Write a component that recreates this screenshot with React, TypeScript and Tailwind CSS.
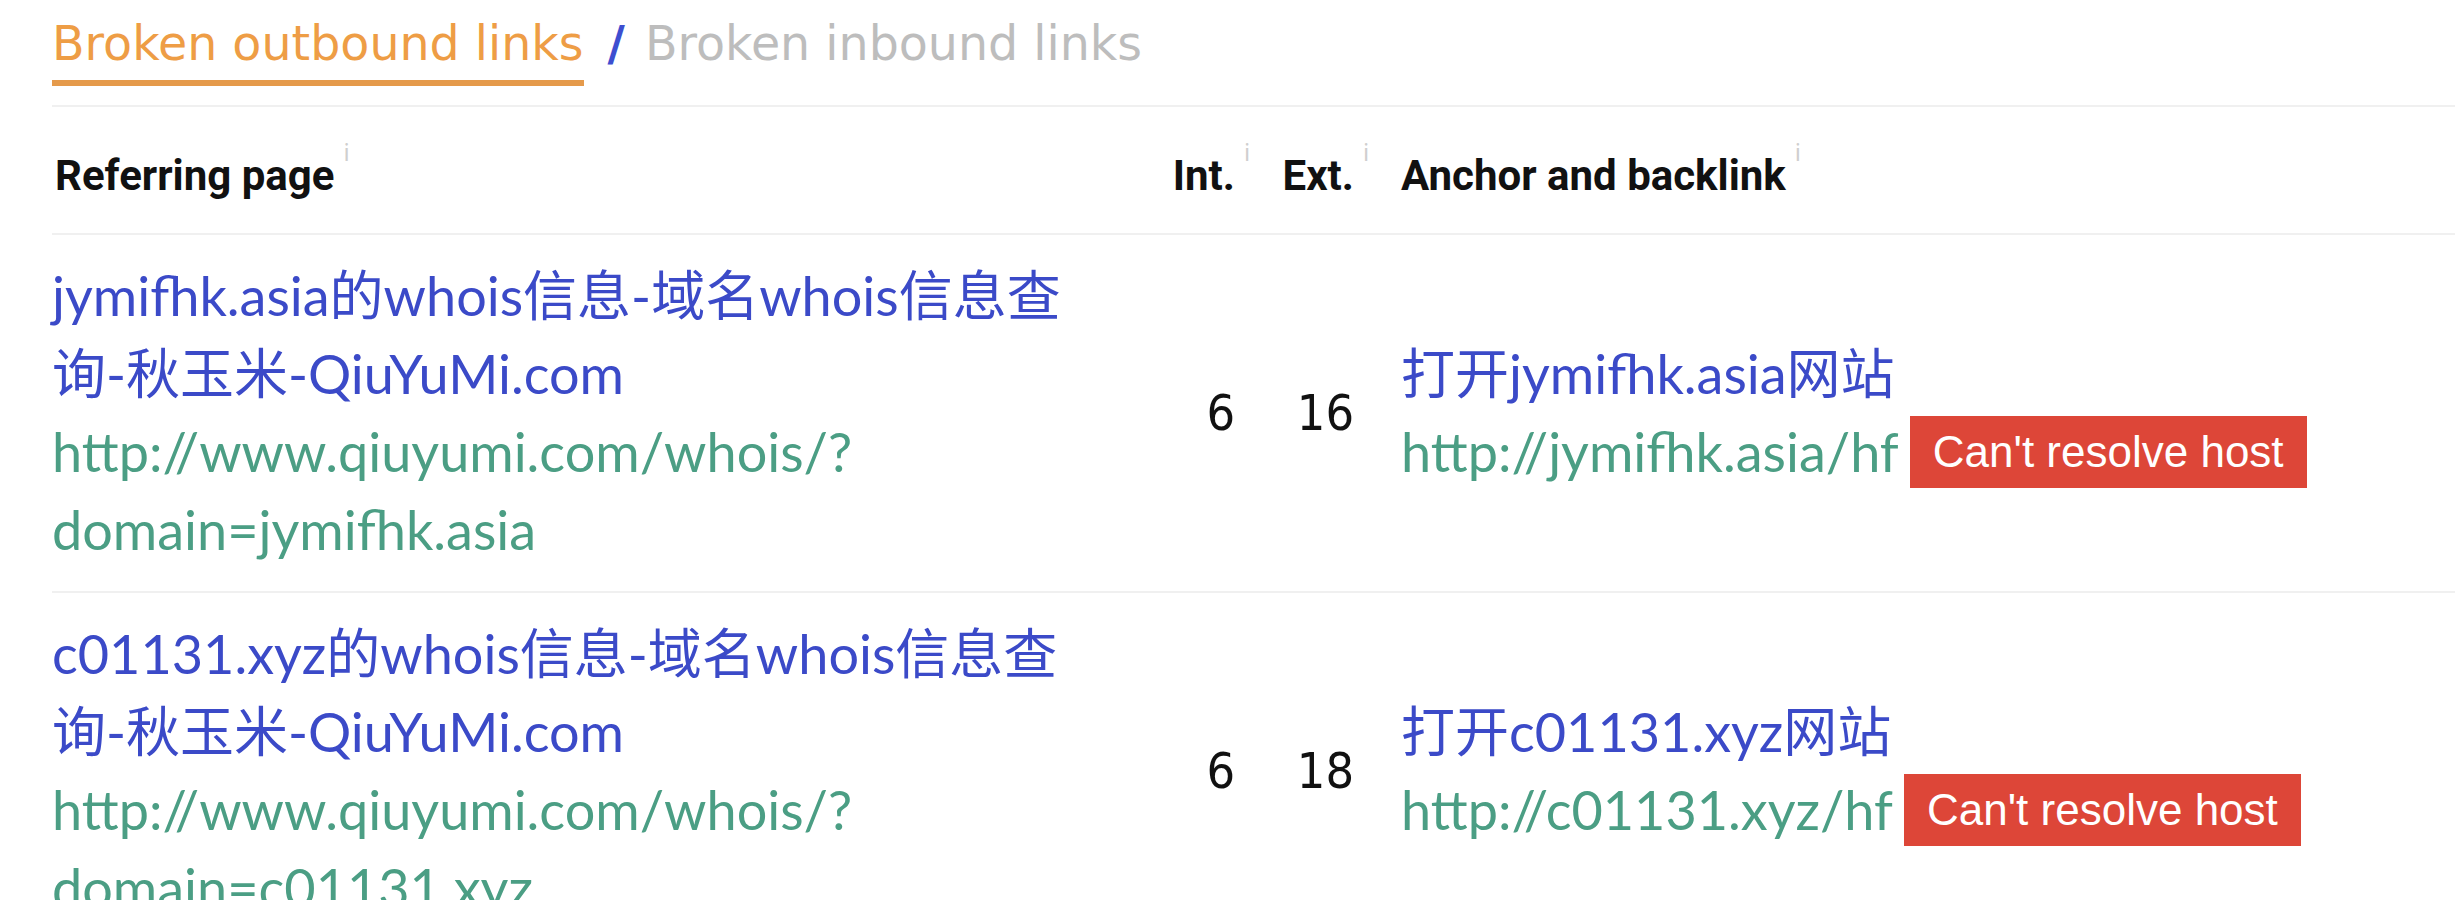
import type { ReactNode } from "react";

type Row = {
  title: string;
  url: string[];
  int: number;
  ext: number;
  anchor: string;
  backlink: string;
};

const rows: Row[] = [
  {
    title: "jymifhk.asia的whois信息-域名whois信息查询-秋玉米-QiuYuMi.com",
    url: ["http://www.qiuyumi.com/whois/?", "domain=jymifhk.asia"],
    int: 6,
    ext: 16,
    anchor: "打开jymifhk.asia网站",
    backlink: "http://jymifhk.asia/hf",
  },
  {
    title: "c01131.xyz的whois信息-域名whois信息查询-秋玉米-QiuYuMi.com",
    url: ["http://www.qiuyumi.com/whois/?", "domain=c01131.xyz"],
    int: 6,
    ext: 18,
    anchor: "打开c01131.xyz网站",
    backlink: "http://c01131.xyz/hf",
  },
];

function HeadLabel({ children }: { children: ReactNode }) {
  return (
    <span className="relative inline-block">
      {children}
      <span className="absolute left-full top-[-10px] ml-[9px] font-['Noto_Sans',sans-serif] text-[24px] font-normal text-[#cfcfcf]">
        i
      </span>
    </span>
  );
}

export default function App() {
  return (
    <main className="min-h-screen bg-white pl-[52px] pr-2 text-[#111]">
      {/* tabs */}
      <div className="flex h-[107px] items-start border-b-2 border-[#f0f0f0] pt-[19px] font-['DejaVu_Sans',sans-serif] text-[47.5px] leading-[50px]">
        <span className="inline-block border-b-[6px] border-[#e59a4b] pb-[11px] text-[#ee9d45]">
          Broken outbound links
        </span>
        <span className="ml-[24px] mr-[20px] font-semibold text-[#3d4ed0]">/</span>
        <span className="text-[#bdbdbd]">Broken inbound links</span>
      </div>

      {/* table header */}
      <div className="flex h-[128px] items-center border-b-2 border-[#f0f0f0] pt-[10px] font-['Roboto',sans-serif] text-[42px] font-bold">
        <div className="w-[1080px] pl-[3px]">
          <HeadLabel>Referring page</HeadLabel>
        </div>
        <div className="w-[130px] pr-[27px] text-right">
          <HeadLabel>Int.</HeadLabel>
        </div>
        <div className="w-[119px] pr-[27px] text-right">
          <HeadLabel>Ext.</HeadLabel>
        </div>
        <div className="pl-[20px]">
          <HeadLabel>Anchor and backlink</HeadLabel>
        </div>
      </div>

      {/* rows */}
      {rows.map((row) => (
        <div
          key={row.anchor}
          className="flex border-b-2 border-[#f0f0f0] py-[22px] font-['Lato','Noto_Sans_CJK_SC',sans-serif] text-[54px] leading-[78px]"
        >
          <div className="w-[1080px] pr-[42px]">
            <div className="text-[#3b4ac8]">{row.title}</div>
            {row.url.map((line) => (
              <div key={line} className="text-[#4b9e84]">
                {line}
              </div>
            ))}
          </div>
          <div className="flex w-[130px] items-center justify-end pr-[27px] font-['DejaVu_Sans_Condensed','DejaVu_Sans',sans-serif] text-[50px]">
            {row.int}
          </div>
          <div className="flex w-[119px] items-center justify-end pr-[27px] font-['DejaVu_Sans_Condensed','DejaVu_Sans',sans-serif] text-[50px]">
            {row.ext}
          </div>
          <div className="flex flex-col justify-center pl-[20px]">
            <div className="text-[#3b4ac8]">{row.anchor}</div>
            <div className="flex items-center gap-[11px]">
              <span className="text-[#4b9e84]">{row.backlink}</span>
              <span className="h-[72px] bg-[#dd4638] px-[23px] font-['Liberation_Sans',sans-serif] text-[44px] leading-[72px] text-white">
                Can't resolve host
              </span>
            </div>
          </div>
        </div>
      ))}
    </main>
  );
}
